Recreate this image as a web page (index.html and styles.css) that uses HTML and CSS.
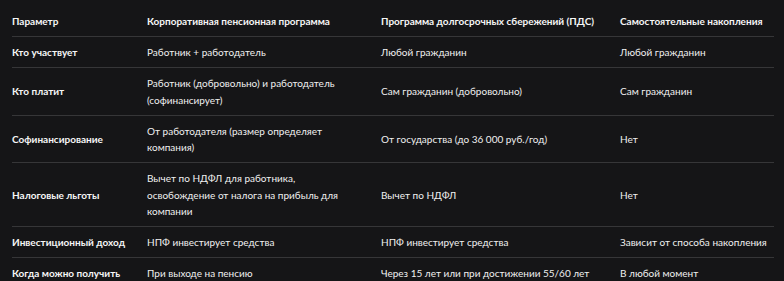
FILE: index.html
```html
<!DOCTYPE html>
<html lang="ru">
<head>
<meta charset="utf-8">
<title>Сравнение программ</title>
<link rel="stylesheet" href="styles.css">
</head>
<body>
<table class="cmp">
  <colgroup>
    <col class="c1"><col class="c2"><col class="c3"><col class="c4">
  </colgroup>
  <thead>
    <tr>
      <th>Параметр</th>
      <th>Корпоративная пенсионная программа</th>
      <th>Программа долгосрочных сбережений (ПДС)</th>
      <th>Самостоятельные накопления</th>
    </tr>
  </thead>
  <tbody>
    <tr>
      <th>Кто участвует</th>
      <td>Работник + работодатель</td>
      <td>Любой гражданин</td>
      <td>Любой гражданин</td>
    </tr>
    <tr>
      <th>Кто платит</th>
      <td>Работник (добровольно) и работодатель (софинансирует)</td>
      <td>Сам гражданин (добровольно)</td>
      <td>Сам гражданин</td>
    </tr>
    <tr>
      <th>Софинансирование</th>
      <td>От работодателя (размер определяет компания)</td>
      <td>От государства (до 36 000 руб./год)</td>
      <td>Нет</td>
    </tr>
    <tr>
      <th>Налоговые льготы</th>
      <td>Вычет по НДФЛ для работника, освобождение от налога на прибыль для компании</td>
      <td>Вычет по НДФЛ</td>
      <td>Нет</td>
    </tr>
    <tr>
      <th>Инвестиционный доход</th>
      <td>НПФ инвестирует средства</td>
      <td>НПФ инвестирует средства</td>
      <td>Зависит от способа накопления</td>
    </tr>
    <tr>
      <th>Когда можно получить</th>
      <td>При выходе на пенсию</td>
      <td>Через 15 лет или при достижении 55/60 лет</td>
      <td>В любой момент</td>
    </tr>
  </tbody>
</table>
</body>
</html>
```

FILE: styles.css
```css
html, body {
  margin: 0;
  padding: 0;
  background: #151517;
}
body {
  padding: 6px 10px 0 12px;
  font-family: "Lato", "Noto Sans", sans-serif;
  font-size: 10px;
  line-height: 16.5px;
  color: #f0f0f0;
}
.cmp {
  border-collapse: collapse;
  table-layout: fixed;
  width: 762px;
}
.c1 { width: 135px; }
.c2 { width: 234px; }
.c3 { width: 239px; }
.c4 { width: 154px; }
.cmp th,
.cmp td {
  text-align: left;
  vertical-align: middle;
  padding: 7px 8px 6.5px 0;
  border-bottom: 1px solid #363638;
}
.cmp th:first-child {
  padding-right: 2px;
}
.cmp th:last-child,
.cmp td:last-child {
  padding-right: 0;
}
.cmp th {
  font-weight: 700;
  color: #f6f6f6;
}
.cmp td {
  font-weight: 400;
}
.cmp td:nth-child(2) {
  padding-right: 18px;
}
```
